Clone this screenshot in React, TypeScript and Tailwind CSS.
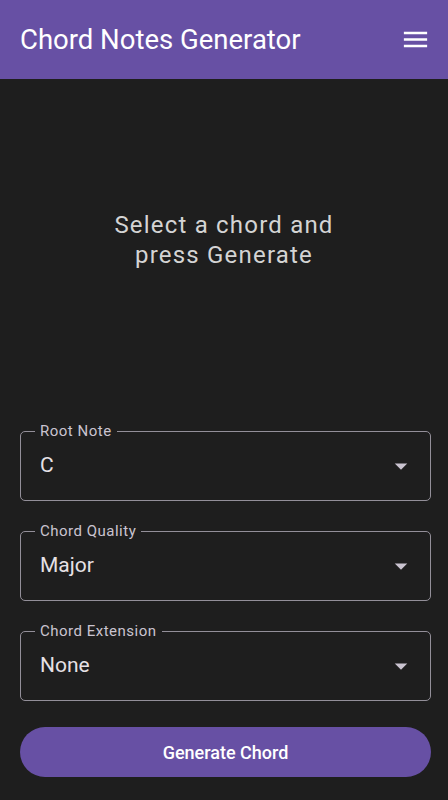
import React from "react";

const fields = [
  { label: "Root Note", value: "C" },
  { label: "Chord Quality", value: "Major" },
  { label: "Chord Extension", value: "None" },
];

function SelectField({ label, value }: { label: string; value: string }) {
  return (
    <div className="relative flex h-[70px] items-center rounded-[5px] border border-[#938f99] pl-[19px] pr-[14px]">
      <span className="absolute left-[14px] top-[-10px] bg-[#1e1e1e] px-[5px] text-[15px] leading-[18px] tracking-[0.5px] text-[#cac4d0]">
        {label}
      </span>
      <span className="flex-1 text-[21px] text-[#e6e1e5]">{value}</span>
      <svg width="30" height="30" viewBox="0 0 24 24" className="fill-[#cac4d0]">
        <path d="M7 10l5 5 5-5z" />
      </svg>
    </div>
  );
}

export default function App() {
  return (
    <div className="flex min-h-[800px] flex-col bg-[#1e1e1e] font-['Roboto',sans-serif]">
      {/* App bar */}
      <header className="flex h-[79px] items-center justify-between bg-[#6750a4] pl-5 pr-[17px]">
        <h1 className="text-[27.5px] text-white">Chord Notes Generator</h1>
        <svg width="31" height="31" viewBox="0 0 24 24" className="fill-white">
          <path d="M3 18h18v-2H3v2zm0-5h18v-2H3v2zm0-7v2h18V6H3z" />
        </svg>
      </header>

      {/* Empty state */}
      <section className="flex h-[322px] items-center justify-center">
        <p className="text-center text-[24px] leading-[30px] tracking-[1.2px] text-[#d4d4d4]">
          Select a chord and
          <br />
          press Generate
        </p>
      </section>

      {/* Form */}
      <div className="flex flex-col gap-[30px] pl-5 pr-[17px] pt-[30px]">
        {fields.map((f) => (
          <SelectField key={f.label} label={f.label} value={f.value} />
        ))}
      </div>
      <div className="pl-5 pr-[17px] pt-[26px]">
        <button className="h-[50px] w-full rounded-full bg-[#6750a4] text-[18px] font-medium text-white">
          Generate Chord
        </button>
      </div>
    </div>
  );
}
